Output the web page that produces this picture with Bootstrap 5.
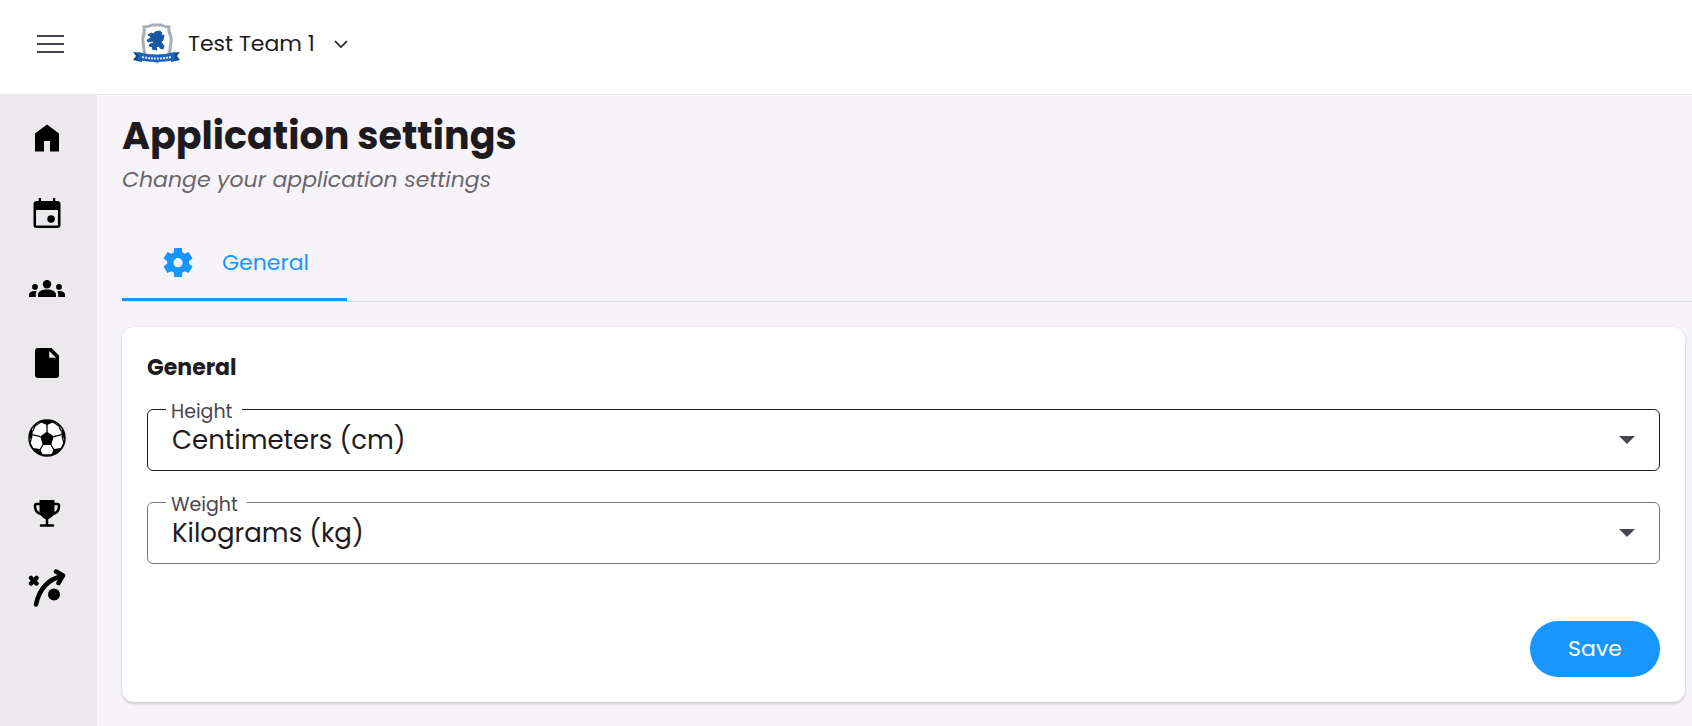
<!DOCTYPE html>
<html lang="en">
<head>
<meta charset="utf-8">
<meta name="viewport" content="width=device-width, initial-scale=1">
<title>Application settings</title>
<link href="https://cdn.jsdelivr.net/npm/bootstrap@5.3.0/dist/css/bootstrap.min.css" rel="stylesheet">
<style>
  body { font-family: Poppins, Inter, sans-serif; font-size: 22px; line-height: 32px; color: #1d1b20; background: #f6f4f8; }
  .topbar { height: 95px; padding: 0 36px 6px; background: #fff; border-bottom: 1px solid #e9e7eb; }
  .topbar svg, .side svg { display: block; }
  .menu-btn, .team-btn { border: 0; background: none; padding: 0; color: inherit; }
  .team-btn { margin-left: 68px; }
  .team-name { margin: 0 16px 0 7px; }
  .side { width: 97px; padding: 5px 3px 0 0; background: #ebe9ec; }
  .side a { height: 75px; color: #000; }
  .content-pane { padding: 16px 0 22px 25px; min-width: 0; }
  .page-title { font-size: 38px; line-height: 50px; font-weight: 700; margin: 0; }
  .page-sub { font-style: italic; font-weight: 400; color: #69666b; margin: 3px 0 0; }
  .tab-row { margin-top: 30px; border-bottom: 1px solid #d9dced; }
  .tab-link { height: 75px; padding: 2px 38px 0; gap: 26px; color: #1896ff; text-decoration: none; border-bottom: 3px solid #1896ff; }
  .settings-card { margin: 25px 7px 0 0; padding: 25px; border-radius: 12px; background: #fff; box-shadow: 0 2px 3px rgba(0,0,0,.16), 0 0 2px rgba(0,0,0,.1); }
  .settings-card h2 { font-size: 22px; line-height: 32px; font-weight: 700; margin: 0 0 25px; }
  .outlined { height: 62px; margin-bottom: 31px; }
  .outlined label { position: absolute; left: 19px; top: -9px; padding: 0 9px 0 5px; font-size: 19px; line-height: 24px; color: #49454f; background: #fff; }
  .outlined select { appearance: none; width: 100%; height: 100%; padding: 0 60px 0 24px; border: 1px solid #79747e; border-radius: 6px; background: #fff; color: #1d1b20; font-size: 26px; }
  .outlined .on { border-color: #1d1b20; }
  .outlined svg { position: absolute; right: 25px; top: 27px; pointer-events: none; }
  .form-actions { padding-top: 26px; }
  .save-btn { width: 130px; height: 56px; border: 0; border-radius: 28px; background: #1896ff; color: #fff; }
</style>
</head>
<body class="min-vh-100 d-flex flex-column">
<header class="topbar d-flex align-items-center">
  <button class="menu-btn" type="button" aria-label="Menu">
    <svg width="28" height="24" viewBox="0 0 28 24" stroke="#49454f" stroke-width="2"><path d="M1 4h27M1 12h27M1 20h27"/></svg>
  </button>
  <button class="team-btn d-flex align-items-center" type="button">
    <svg width="49" height="42" viewBox="0 0 49 42" aria-hidden="true">
      <path d="M12 4c4 0 6-1 8-2h9c2 1 4 2 8 2-1 4 1 7 2 10 1 5-1 8-1 13 0 6-7 8-13 12-7-4-13-6-13-12 0-5-2-8-1-13 1-3 2-6 1-10z" fill="#fff" stroke="#a9adb3" stroke-width="3"/>
      <path d="M19 10l3 1 1-2 5-1 2 2-1 3 3-1-1 5-2 2 3 4-1 3-3-1-1-2-3 1 1 3-5-1 1-2-4-1 1-2 4-1-1-2-5 1-1-2 4-2-1-2-2-1z" fill="#1a57a5" stroke="#1a57a5"/>
      <path d="M1 29l9 1v9l-9-2 3-4zM48 29l-9 1v9l9-2-3-4z" fill="#164a8e"/>
      <path d="M6 29q18 5 37 0v8q-19 4-37 0z" fill="#1c62b5"/>
      <path d="M10 34q15 3 29 0" fill="none" stroke="#d5e4f5" stroke-width="2" stroke-dasharray="2 1"/>
    </svg>
    <span class="team-name">Test Team 1</span>
    <svg width="22" height="22" viewBox="0 0 22 22" fill="none" stroke="#1d1b20" stroke-width="1.700"><path d="M4 8l6 6 6-6"/></svg>
  </button>
</header>
<div class="d-flex flex-grow-1">
  <nav class="side flex-shrink-0" aria-label="Main">
    <a class="d-flex align-items-center justify-content-center" href="#" aria-label="Home"><svg width="36" height="36" viewBox="0 0 24 24"><path d="M4 21V9l8-6 8 6v12h-6v-7h-4v7z"/></svg></a>
    <a class="d-flex align-items-center justify-content-center" href="#" aria-label="Calendar"><svg width="36" height="36" viewBox="0 0 24 24"><path fill-rule="evenodd" d="M5 22q-2 0-2-2V6q0-2 2-2h1.500V2H8v2h8V2h1.500v2H19q2 0 2 2v14q0 2-2 2zM4.700 10v10.400h14.600V10z"/><circle cx="14.700" cy="16" r="2.500"/></svg></a>
    <a class="d-flex align-items-center justify-content-center" href="#" aria-label="Teams"><svg width="36" height="36" viewBox="0 0 24 24"><path d="M0 18v-1.600C0 15 1.600 14 4 14l1.200.1Q4.500 15 4.500 16.400V18zM6 18v-1.600C6 14.300 8.700 13 12 13s6 1.300 6 3.400V18zM19.500 18v-1.600q0-1.400-.7-2.300L20 14c2.400 0 4 1 4 2.400V18z"/><circle cx="4" cy="11.300" r="1.900"/><circle cx="12" cy="9.500" r="2.800"/><circle cx="20" cy="11.300" r="1.900"/></svg></a>
    <a class="d-flex align-items-center justify-content-center" href="#" aria-label="Documents"><svg width="36" height="36" viewBox="0 0 24 24"><path fill-rule="evenodd" d="M6 2h9l5 5V20q0 2-2 2H6q-2 0-2-2V4q0-2 2-2zM13.500 4v4.500H18z"/></svg></a>
    <a class="d-flex align-items-center justify-content-center" href="#" aria-label="Matches"><svg width="38" height="38" viewBox="0 0 38 38">
      <defs><clipPath id="ballClip"><circle cx="19" cy="19" r="18"/></clipPath></defs>
      <circle cx="19" cy="19" r="18" fill="#fff" stroke="#000" stroke-width="1.500"/>
      <g clip-path="url(#ballClip)"><path d="M19 12.500l6.800 5-2.600 8.500h-8.400l-2.600-8.500zM12 0h14l-1 3.500-6 2.500-6-2.500zM0 12l3-2 2 2-1 5-4 5zM38 12l-3-2-2 2 1 5 4 5zM5 29l7 1 3 6v3L5 34zM33 29l-7 1-3 6v3l10-5z"/>
      <path d="M19 13V5M25.500 17.700l8.500-2M12.500 17.700L4 15.700M15 25.500L12 31M23 25.500l3 5.500M13 3L7 7l-2 5M25 3l6 4 2 5M4 17l-2 7 3 6M34 17l2 7-3 6M14 36h10" fill="none" stroke="#000" stroke-width="1.300"/></g></svg></a>
    <a class="d-flex align-items-center justify-content-center" href="#" aria-label="Trophies"><svg width="36" height="36" viewBox="0 0 36 36"><path d="M10.500 5h15v13q-1.500 4-6 6h-3q-4.500-2-6-6z"/><path d="M11 9H7.500Q6 9 6 11c0 5 2 7 6 8M25 9h3.500Q30 9 30 11c0 5-2 7-6 8M18 22v8M12 30.500h12" fill="none" stroke="#000" stroke-width="2.500" stroke-linecap="round"/></svg></a>
    <a class="d-flex align-items-center justify-content-center" href="#" aria-label="Tactics"><svg width="38" height="38" viewBox="0 0 38 38" fill="none" stroke="#000" stroke-width="4.500" stroke-linecap="round" stroke-linejoin="round"><path d="M8 35.500Q13 12 34 7M28 2.500L35 6.500 30.500 14"/><path d="M3 9l5.500 5.500M8.500 9L3 14.500"/><circle cx="26" cy="25.500" r="6" fill="#000" stroke="none"/></svg></a>
  </nav>
  <main class="content-pane flex-grow-1">
    <h1 class="page-title">Application settings</h1>
    <p class="page-sub">Change your application settings</p>
    <div class="tab-row d-flex">
      <a class="tab-link d-flex align-items-center" href="#general">
        <svg width="36" height="36" viewBox="0 0 24 24" fill="currentColor"><path d="M9.250 22l-.4-3.200q-.6-.25-1.600-.95l-3 1.250-2.750-4.750 2.600-1.950v-1.800L1.500 8.650 4.250 3.900l3 1.250q.8-.6 1.600-.95l.4-3.200h5.500l.4 3.200q.8.350 1.600.95l3-1.250 2.750 4.750-2.600 1.950v1.800l2.600 1.950-2.750 4.750-3-1.250q-.8.600-1.600.95l-.4 3.200zM12 14.900a3.300 3.300 0 1 0 0-6.600 3.300 3.300 0 0 0 0 6.600z" fill-rule="evenodd" transform="translate(1 1.100) scale(.92)"/></svg>
        <span>General</span>
      </a>
    </div>
    <form class="settings-card" id="general">
      <h2>General</h2>
      <div class="outlined position-relative">
        <select class="on" id="height"><option>Centimeters (cm)</option></select>
        <label for="height">Height</label>
        <svg width="16" height="8" viewBox="0 0 16 8"><path d="M0 0h16L8 8z" fill="#49454f"/></svg>
      </div>
      <div class="outlined position-relative">
        <select id="weight"><option>Kilograms (kg)</option></select>
        <label for="weight">Weight</label>
        <svg width="16" height="8" viewBox="0 0 16 8"><path d="M0 0h16L8 8z" fill="#49454f"/></svg>
      </div>
      <div class="form-actions d-flex justify-content-end"><button class="save-btn" type="button">Save</button></div>
    </form>
  </main>
</div>
<script src="https://cdn.jsdelivr.net/npm/bootstrap@5.3.0/dist/js/bootstrap.bundle.min.js"></script>
</body>
</html>
